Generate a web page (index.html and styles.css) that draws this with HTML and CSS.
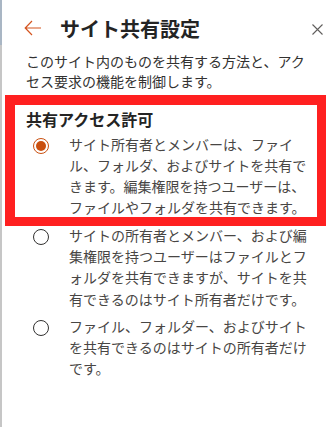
FILE: index.html
```html
<!DOCTYPE html>
<html lang="ja">
<head>
  <meta charset="UTF-8" />
  <meta name="viewport" content="width=device-width, initial-scale=1.0" />
  <title>サイト共有設定</title>
  <link rel="stylesheet" href="styles.css">
</head>
<body>
  <div class="panel">
    <div class="header">
      <svg class="back" width="18" height="16" viewBox="0 0 18 16">
        <path d="M17 8H1.5M8 1L1.2 8L8 15" fill="none" stroke="#d4541f" stroke-width="1.2" />
      </svg>
      <h1 class="title">サイト共有設定</h1>
      <svg class="close" width="11" height="11" viewBox="0 0 11 11">
        <path d="M0.5 0.5L10.5 10.5M10.5 0.5L0.5 10.5" fill="none" stroke="#605e5c" stroke-width="1.1" />
      </svg>
    </div>

    <p class="desc">このサイト内のものを共有する方法と、アクセス要求の機能を制御します。</p>

    <div class="group">
      <div class="highlight">
        <h2 class="group-title">共有アクセス許可</h2>
        <label class="option">
          <span class="radio checked"></span>
          <span class="option-text">サイト所有者とメンバーは、ファイル、フォルダ、およびサイトを共有できます。編集権限を持つユーザーは、ファイルやフォルダを共有できます。</span>
        </label>
      </div>

      <label class="option">
        <span class="radio"></span>
        <span class="option-text">サイトの所有者とメンバー、および編集権限を持つユーザーはファイルとフォルダを共有できますが、サイトを共有できるのはサイト所有者だけです。</span>
      </label>

      <label class="option">
        <span class="radio"></span>
        <span class="option-text">ファイル、フォルダー、およびサイトを共有できるのはサイトの所有者だけです。</span>
      </label>
    </div>
  </div>
</body>
</html>
```

FILE: styles.css
```css
html, body {
  margin: 0;
  height: 100%;
}

body {
  font-family: "Noto Sans CJK JP", "Noto Sans", sans-serif;
  color: #323130;
  background:
    linear-gradient(#a9b6c4, #a9b6c4) 0 0 / 2px 45px no-repeat,
    linear-gradient(to right, #c6c6c6 2px, #ffffff 2px);
  line-break: normal;
}

.panel {
  padding-top: 17px;
}

.header {
  display: flex;
  align-items: center;
  height: 24px;
  padding: 0 13px 0 24px;
}

.back {
  flex: none;
  margin-top: -2px;
}

.title {
  margin: 0 0 0 18px;
  font-size: 20px;
  font-weight: 700;
  line-height: 24px;
  color: #242424;
}

.close {
  flex: none;
  margin-left: auto;
}

.desc {
  margin: 10px 0 0 26px;
  width: 288px;
  font-size: 14px;
  line-height: 20px;
  color: #323130;
}

.group {
  margin-top: 17px;
  padding-left: 26px;
}

.group > .option {
  margin-top: 6px;
}

.highlight {
  position: relative;
}

/* red annotation box drawn over the first option */
.highlight::after {
  content: '';
  position: absolute;
  top: -13px;
  bottom: -7px;
  left: -21px;
  right: 10px;
  border: solid #ff2020;
  border-width: 10px 9px 9px 10px;
  pointer-events: none;
}

.group-title {
  margin: 0 0 3.5px;
  font-size: 16px;
  font-weight: 700;
  line-height: 22px;
  color: #242424;
}

.option {
  display: flex;
  align-items: flex-start;
}

.radio {
  flex: none;
  box-sizing: border-box;
  width: 16px;
  height: 16px;
  margin: 4px 20px 0 7px;
  border: 1px solid #323130;
  border-radius: 50%;
  position: relative;
}

.radio.checked {
  border-color: #ca5010;
}

.radio.checked::after {
  content: '';
  position: absolute;
  top: 2px;
  left: 2px;
  width: 10px;
  height: 10px;
  border-radius: 50%;
  background: #ca5010;
}

.option-text {
  width: 248px;
  font-size: 14px;
  line-height: 21.3px;
  color: #484644;
}
```
